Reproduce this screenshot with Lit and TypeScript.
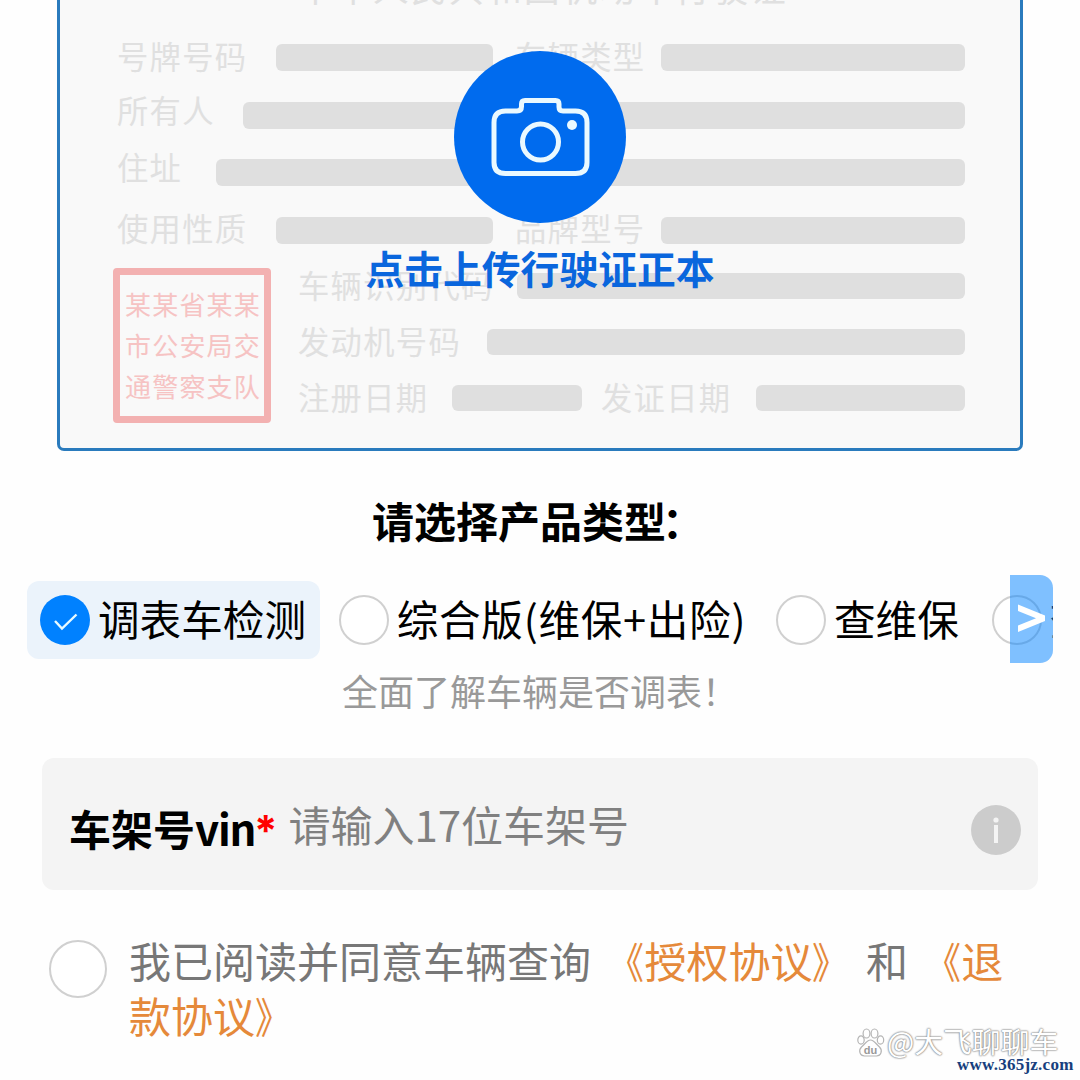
import { LitElement, html, css } from "lit";
import { customElement, state } from "lit/decorators.js";
import { classMap } from "lit/directives/class-map.js";

type Cell = { text?: string; width: number };
type Row = { cells: Cell[]; tone: string };

// Widths alternate label / placeholder bar, in px.
const UPPER: Row[] = [
  { tone: "", cells: [{ text: "号牌号码", width: 159 }, { width: 217 }, { text: "车辆类型", width: 146 }, { width: 304 }] },
  { tone: "lift", cells: [{ text: "所有人", width: 126 }, { width: 722 }] },
  { tone: "lift", cells: [{ text: "住址", width: 99 }, { width: 749 }] },
  { tone: "", cells: [{ text: "使用性质", width: 159 }, { width: 217 }, { text: "品牌型号", width: 146 }, { width: 304 }] },
];
const LOWER: Row[] = [
  { tone: "", cells: [{ text: "车辆识别代码", width: 219 }, { width: 448 }] },
  { tone: "", cells: [{ text: "发动机号码", width: 189 }, { width: 478 }] },
  { tone: "", cells: [{ text: "注册日期", width: 154 }, { width: 130 }, { text: "发证日期", width: 155 }, { width: 209 }] },
];

@customElement("license-card")
class LicenseCard extends LitElement {
  static styles = css`
    :host { display: block; }
    .card {
      position: relative; box-sizing: border-box; width: 966px; height: 451px;
      margin-left: 57px; border: 3px solid #2a7bbd; border-top: 0;
      border-radius: 0 0 7px 7px; background: #f9f9f9; overflow: hidden;
      color: #e0e0e0; font-weight: 400;
    }
    .title {
      display: flex; justify-content: center; align-items: flex-end; box-sizing: border-box;
      height: 28.750px; padding-bottom: 25px; white-space: nowrap;
      font-size: 36px; line-height: 36px; letter-spacing: 1.700px; text-indent: 5px;
    }
    .row { display: flex; align-items: center; height: 57.5px; }
    .label {
      flex: none; font-size: 31.300px; line-height: 40px; letter-spacing: 1.300px; white-space: nowrap;
      padding-bottom: 4px;
    }
    .second { padding-left: 22px; }
    .lift .label { padding-bottom: 11px; }
    .bar { flex: none; height: 27px; border-radius: 6px; background: #dfdfdf; }
    .upper { padding-left: 57px; }
    .lower { display: flex; padding-left: 53px; }
    .lower .row { height: 56px; }
    .lower .bar { height: 26px; }
    .lower .label { padding-bottom: 2px; }
    .lower .second { padding-left: 19px; }
    .fields { margin: -1px 0 0 27px; }
    .seal {
      box-sizing: border-box; width: 158px; height: 155px; margin-top: 9px;
      border: 7px solid #f3b1b1; border-radius: 4px; padding: 8px 0 0 5px;
      color: #f6c3c3; font-size: 26px; line-height: 41px; letter-spacing: 1.2px; white-space: nowrap;
    }
    .upload {
      position: absolute; left: 0; top: 51px; width: 100%;
      display: flex; flex-direction: column; align-items: center; color: #0a66dd;
      font-size: 38.8px; line-height: 48px; font-weight: 700;
    }
    .upload svg { display: block; margin-bottom: 20px; }
  `;

  private renderRow(row: Row) {
    return html`<div class="row ${row.tone}">
      ${row.cells.map((c, i) =>
        c.text
          ? html`<span class=${classMap({ label: true, second: i > 0 })} style="width:${c.width}px">${c.text}</span>`
          : html`<span class="bar" style="width:${c.width}px"></span>`
      )}
    </div>`;
  }

  render() {
    return html`<div class="card">
      <div class="title"><span>中华人民共和国机动车行驶证</span></div>
      <div class="upper">${UPPER.map((r) => this.renderRow(r))}</div>
      <div class="lower">
        <div class="seal">某某省某某<br />市公安局交<br />通警察支队</div>
        <div class="fields">${LOWER.map((r) => this.renderRow(r))}</div>
      </div>
      <div class="upload">
        <svg width="172" height="172" viewBox="0 0 172 172" fill="none">
          <circle cx="86" cy="86" r="86" fill="#006bee" />
          <g stroke="#eaf9ff" stroke-width="5" stroke-linejoin="round">
            <path d="M51.500 60H63Q67.500 60 67.500 55.500V53Q67.500 49.500 71 49.500H101.500Q105 49.500 105 53V56Q105 60 109 60H121.500Q133 60 133 71.500V111.500Q133 122.500 121.500 122.500H51.500Q40 122.500 40 111.500V71.500Q40 60 51.500 60Z" />
            <circle cx="86.500" cy="91" r="18" />
          </g>
          <circle cx="118" cy="74" r="5" fill="#eaf9ff" />
        </svg>
        <span>点击上传行驶证正本</span>
      </div>
    </div>`;
  }
}

@customElement("app-root")
class AppRoot extends LitElement {
  static styles = css`
    :host {
      display: block; position: relative; width: 1080px; height: 1080px; overflow: hidden;
      background: #fefefe; color: #000;
      font-family: "Noto Sans CJK SC", "Noto Sans", sans-serif;
    }
    .heading { margin-top: 39px; text-align: center; font-size: 42px; line-height: 60px; font-weight: 700; }
    .colon { margin-left: -4px; margin-right: 4px; }
    .picker { position: relative; width: 1026px; margin: 25px 0 0 27px; height: 88px; }
    .options { display: flex; align-items: center; gap: 5.800px; height: 90px; overflow: hidden; }
    .option {
      flex: none; display: flex; align-items: center; gap: 8px; box-sizing: border-box;
      height: 78px; padding: 0 14px 0 13px; border-radius: 12px;
      font-size: 41.600px; line-height: 60px; white-space: nowrap; cursor: pointer;
    }
    .option.on { background: #ebf3fb; }
    .dot { flex: none; box-sizing: border-box; width: 50px; height: 50px; border: 2px solid #d0d0d0; border-radius: 50%; background: #fff; }
    .on .dot { border: 0; background: #0081ff; }
    .dot svg { display: block; }
    .text { padding-bottom: 4px; }
    .wide { letter-spacing: 0.700px; margin-right: -3px; }
    .next {
      position: absolute; right: 0; top: 0; width: 43px; height: 88px;
      border-radius: 0 13px 13px 0; background: rgba(0, 129, 255, 0.5);
    }
    .next svg { display: block; }
    .hint { text-align: center; font-size: 36px; line-height: 54px; color: #999; }
    .field {
      display: flex; align-items: center; box-sizing: border-box; width: 996px; height: 132px;
      margin: 41px 0 0 42px; padding: 0 17px 0 27px; border-radius: 12px; background: #f4f4f4;
      font-size: 42px; line-height: 60px; white-space: nowrap;
    }
    .name { display: flex; font-weight: 700; padding-top: 8px; }
    .latin { letter-spacing: -1.300px; }
    .must { margin-left: -1px; color: #f00; font-family: "Inter", sans-serif; font-size: 42px; line-height: 66px; height: 60px; }
    .placeholder { flex: 1; margin-left: 11px; color: #808080; }
    .field svg { display: block; padding-top: 11px; }
    .agree { display: flex; margin: 42px 0 0 49px; }
    .tick { flex: none; box-sizing: border-box; width: 58px; height: 58px; margin-top: 8px; border: 2px solid #d0d0d0; border-radius: 50%; background: #fff; }
    .terms { margin-left: 22px; width: 912px; font-size: 42px; line-height: 55px; color: #777; word-spacing: 2px; }
    .link { color: #e5893a; }
    .open, .close { display: inline-block; transform: scaleX(0.850); transform-origin: right; }
    .close { transform-origin: left; }
    .mark {
      position: absolute; left: 856px; top: 1021px; display: flex; align-items: center; gap: 2px;
      font-size: 28.800px; line-height: 40px; color: #fff; white-space: nowrap;
      text-shadow: 0 0 2px #888, 0 0 2px #999, 0 0 1px #888;
    }
    .mark svg { padding-top: 4px; }
    .du { text-shadow: none; }
    .site {
      position: absolute; left: 957px; top: 1053px; font: 700 17px/24px "Liberation Serif", serif;
      color: #173f7d; white-space: nowrap; letter-spacing: 0.250px;
    }
  `;

  @state() private selected = 0;
  private options = ["调表车检测", "综合版(维保+出险)", "查维保", "查出险"];

  private link(name: string) {
    return html`<span class="link"><span class="open">《</span>${name}<span class="close">》</span></span>`;
  }

  render() {
    return html`
      <license-card></license-card>
      <div class="heading">请选择产品类型<span class="colon">：</span></div>
      <div class="picker">
        <div class="options">
          ${this.options.map(
            (o, i) => html`<div class=${classMap({ option: true, on: i === this.selected })} @click=${() => (this.selected = i)}>
              <span class="dot">${i === this.selected
                ? html`<svg width="50" height="50" viewBox="0 0 50 50" fill="none"><path d="M15 26l7 7.500 14.500-14" stroke="#e8faff" stroke-width="2.400" /></svg>`
                : ""}</span>
              <span class=${classMap({ text: true, wide: i === 1 })}>${o}</span>
            </div>`
          )}
        </div>
        <div class="next">
          <svg width="43" height="88" viewBox="0 0 43 88"><path d="M8 29.500L35 40.500V46L8 57V50.500L26 43.300 8 36Z" fill="#fff" /></svg>
        </div>
      </div>
      <div class="hint">全面了解车辆是否调表！</div>
      <div class="field">
        <span class="name">车架号<span class="latin">vin</span><span class="must">*</span></span>
        <span class="placeholder">请输入17位车架号</span>
        <svg width="50" height="50" viewBox="0 0 50 50">
          <circle cx="25" cy="25" r="25" fill="#ccc" />
          <circle cx="25" cy="15" r="2.600" fill="#f4f4f4" />
          <rect x="23" y="20" width="4" height="18" fill="#f4f4f4" />
        </svg>
      </div>
      <div class="agree">
        <span class="tick"></span>
        <div class="terms">我已阅读并同意车辆查询 ${this.link("授权协议")} 和 ${this.link("退款协议")}</div>
      </div>
      <div class="mark">
        <svg width="29" height="32" viewBox="0 0 29 32">
          <g fill="#fff" stroke="#b5b5b5" stroke-width="1.200">
            <ellipse cx="5" cy="13" rx="3.200" ry="4.200" />
            <ellipse cx="10.500" cy="6.500" rx="3.400" ry="4.500" />
            <ellipse cx="18.500" cy="6.500" rx="3.400" ry="4.500" />
            <ellipse cx="24.500" cy="13" rx="3.200" ry="4.200" />
            <path d="M14.500 13C18 13 20 17 23.500 20 27 23.500 25 29 20.500 29H8.500C4 29 2 23.500 5.500 20 9 17 11 13 14.500 13Z" />
          </g>
          <text class="du" x="14.500" y="27" text-anchor="middle" font-family="Liberation Sans" font-weight="700" font-size="11" fill="#999">du</text>
        </svg>
        <span>@大飞聊聊车</span>
      </div>
      <div class="site">www.365jz.com</div>
    `;
  }
}
